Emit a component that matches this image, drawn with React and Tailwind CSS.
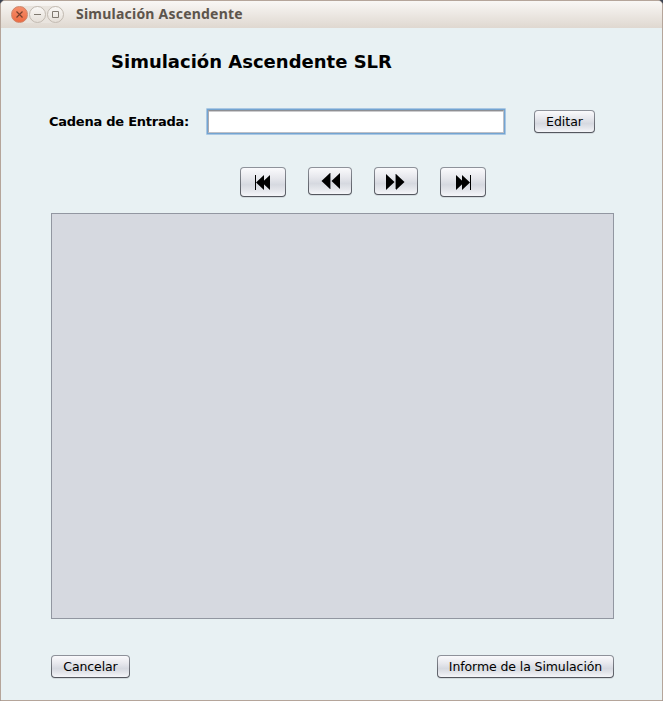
import React from 'react';

function Button({ className = '', label, children }) {
  return (
    <button
      aria-label={label}
      className={`block shrink-0 rounded-[4px] bg-linear-to-b from-[#8f939b] to-[#53565d] p-px shadow-[0_1px_0_#d3dade] ${className}`}
    >
      <span className="flex h-full w-full items-center justify-center rounded-[3px] bg-[linear-gradient(#fafafc_0%,#e7e8ed_35%,#d6d9e0_60%,#e4e6eb_80%,#f5f6f9_100%)] whitespace-nowrap">
        {children}
      </span>
    </button>
  );
}

function Glyph({ d, edges, className = 'h-[28px] w-[44px]', viewBox = '0 0 44 28' }) {
  return (
    <svg className={className} viewBox={viewBox} aria-hidden="true">
      {edges && <path d={edges} fill="#85878d" />}
      <path d={d} fill="#000" />
    </svg>
  );
}

function WindowControl({ close, d }) {
  return (
    <span
      className={`flex size-[17px] items-center justify-center rounded-full border ${
        close
          ? 'border-[#cf8468] bg-linear-to-b from-[#f58e6b] to-[#ed6b42]'
          : 'border-[#c2bab1] bg-linear-to-b from-[#faf8f6] to-[#e5dfd8]'
      }`}
    >
      <svg className="size-[15px] shrink-0" viewBox="0 0 15 15" aria-hidden="true">
        <path d={d} fill="none" stroke={close ? '#763f2c' : '#807970'} strokeWidth={close ? 1.2 : 1} />
      </svg>
    </span>
  );
}

export default function App() {
  return (
    <div className="h-[701px] w-[663px] bg-[#3d4351] font-['DejaVu_Sans',sans-serif] text-black">
      <div className="flex h-full w-full flex-col overflow-hidden rounded-t-[5px] border border-[#b5a59a] bg-[#e8f1f3]">
        <header className="flex h-[27px] shrink-0 items-center bg-linear-to-b from-[#f9f7f5] to-[#dfd8d0] pl-[10px]">
          <div className="flex gap-px rounded-full bg-[#e9e4de]">
            <WindowControl close d="M4.5 4.5L10.5 10.5M10.5 4.5L4.5 10.5" />
            <WindowControl d="M4 7.5H11" />
            <WindowControl d="M4.5 4.5H10.5V10.5H4.5Z" />
          </div>
          <span className="mb-[2px] ml-[12px] font-['Noto_Sans',sans-serif] text-[14px] leading-[20px] font-bold tracking-[0.22px] whitespace-nowrap text-[#5d554c]">
            Simulación Ascendente
          </span>
        </header>

        <main className="flex flex-col pr-[48px] pl-[50px]">
          <h1 className="mt-[22px] ml-[60px] h-[24px] text-[18px] leading-[24px] font-bold whitespace-nowrap">
            Simulación Ascendente SLR
          </h1>

          <div className="mt-[34px] -ml-[2px] flex h-[27px] items-center">
            <label
              htmlFor="cadena"
              className="w-[157px] text-[13px] leading-[16px] font-bold tracking-[-0.25px] whitespace-nowrap"
            >
              Cadena de Entrada:
            </label>
            <div className="h-[27px] w-[300px] shrink-0 rounded-[1px] border border-[#a9c7e3] bg-[#73a4d1] p-px">
              <input
                id="cadena"
                className="block h-full w-full border border-t-[#8e8f93] border-r-[#bec0c6] border-b-[#bec0c6] border-l-[#aaaab0] bg-white shadow-[inset_0_1px_0_#ccccce] outline-none"
              />
            </div>
            <Button className="ml-[28px] h-[23px] w-[61px] text-[12.5px] leading-[15px]">Editar</Button>
          </div>

          <div className="mt-[32px] ml-[189px] flex h-[30px] items-start gap-[22px]">
            <Button label="Inicio" className="h-[30px] w-[46px]">
              <Glyph d="M14 7H15V22H14ZM23 7V22L15 14.5ZM29 7V22L21 14.5Z" />
            </Button>
            <Button label="Anterior" className="h-[28px] w-[44px]">
              <Glyph
                className="h-[26px] w-[42px]"
                viewBox="0 0 42 26"
                edges="M21 5H22V21H21Z"
                d="M21 5V21L12.5 13ZM31 5V21L22.5 13Z"
              />
            </Button>
            <Button label="Siguiente" className="h-[28px] w-[44px]">
              <Glyph
                className="h-[26px] w-[42px]"
                viewBox="0 0 42 26"
                edges="M20 6H21V21H20Z"
                d="M11 6V22L19.5 14ZM21 6V22L29.5 14Z"
              />
            </Button>
            <Button label="Final" className="h-[30px] w-[46px]">
              <Glyph d="M15 7V22L23 14.5ZM21 7V22L29 14.5ZM29 7H30V22H29Z" />
            </Button>
          </div>

          <section className="mt-[16px] h-[406px] w-[563px] border border-[#9297a1] bg-[#d6d9e0]" />

          <footer className="mt-[36px] flex w-[563px] justify-between text-[12.5px] leading-[15px] tracking-[-0.1px]">
            <Button className="h-[23px] w-[79px]">Cancelar</Button>
            <Button className="h-[23px] w-[177px]">Informe de la Simulación</Button>
          </footer>
        </main>
      </div>
    </div>
  );
}
